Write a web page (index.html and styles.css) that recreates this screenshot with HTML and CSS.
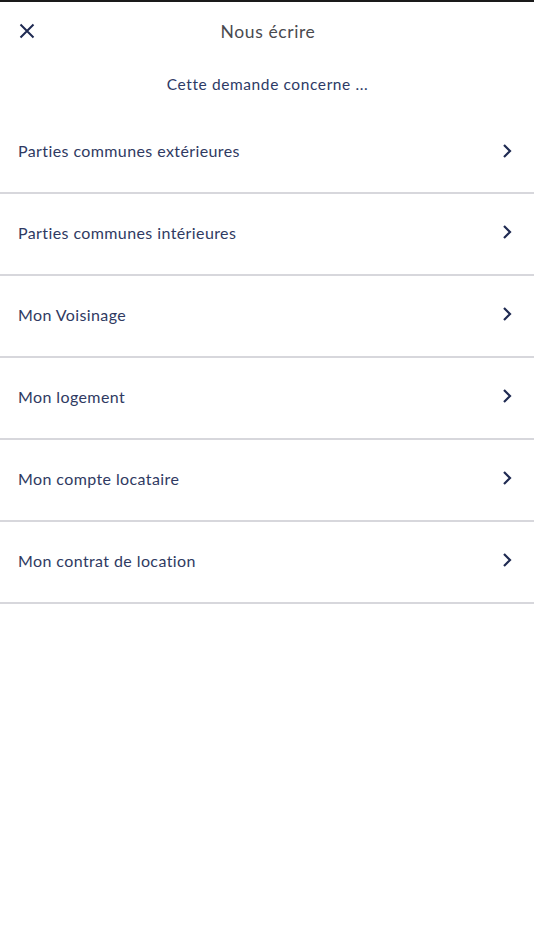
FILE: index.html
```html
<!DOCTYPE html>
<html lang="fr">
<head>
<meta charset="utf-8">
<link rel="stylesheet" href="styles.css">
</head>
<body>
<div class="topline"></div>
<header class="header">
  <button class="close" aria-label="Fermer">
    <svg width="16" height="16" viewBox="0 0 16 16"><path d="M1.5 1.5 L14.5 14.5 M14.5 1.5 L1.5 14.5" stroke="#1f2a52" stroke-width="2" fill="none"/></svg>
  </button>
  <h1 class="title">Nous écrire</h1>
</header>
<p class="subtitle">Cette demande concerne ...</p>
<ul class="list">
  <li class="item"><span>Parties communes extérieures</span><svg class="chev" width="10" height="16" viewBox="0 0 10 16"><path d="M2 2 L8 8 L2 14" stroke="#1f2a52" stroke-width="2.2" fill="none"/></svg></li>
  <li class="item"><span>Parties communes intérieures</span><svg class="chev" width="10" height="16" viewBox="0 0 10 16"><path d="M2 2 L8 8 L2 14" stroke="#1f2a52" stroke-width="2.2" fill="none"/></svg></li>
  <li class="item"><span>Mon Voisinage</span><svg class="chev" width="10" height="16" viewBox="0 0 10 16"><path d="M2 2 L8 8 L2 14" stroke="#1f2a52" stroke-width="2.2" fill="none"/></svg></li>
  <li class="item"><span>Mon logement</span><svg class="chev" width="10" height="16" viewBox="0 0 10 16"><path d="M2 2 L8 8 L2 14" stroke="#1f2a52" stroke-width="2.2" fill="none"/></svg></li>
  <li class="item"><span>Mon compte locataire</span><svg class="chev" width="10" height="16" viewBox="0 0 10 16"><path d="M2 2 L8 8 L2 14" stroke="#1f2a52" stroke-width="2.2" fill="none"/></svg></li>
  <li class="item"><span>Mon contrat de location</span><svg class="chev" width="10" height="16" viewBox="0 0 10 16"><path d="M2 2 L8 8 L2 14" stroke="#1f2a52" stroke-width="2.2" fill="none"/></svg></li>
</ul>
</body>
</html>
```
FILE: styles.css
```css
* { box-sizing: border-box; }
html, body { margin: 0; padding: 0; background: #fff; }
body { font-family: Lato, "Open Sans", sans-serif; width: 534px; height: 950px; }
.topline { height: 2px; background: #1a1a1a; }
.header { position: relative; height: 58px; display: flex; align-items: center; justify-content: center; }
.close { position: absolute; left: 19px; top: 21px; width: 16px; height: 16px; padding: 0; border: 0; background: none; display: flex; }
.title { margin: 0; font-size: 17.5px; font-weight: 400; color: #4a4a4f; letter-spacing: 0.6px; padding-left: 2px; }
.subtitle { margin: 0; height: 53px; padding-top: 15px; text-align: center; font-size: 15.5px; color: #2d3a66; letter-spacing: 0.6px; padding-left: 1px; }
.list { list-style: none; margin: 0; padding: 0; }
.item { height: 82px; display: flex; align-items: center; justify-content: space-between; padding: 0 22px 4px 18px; border-bottom: 2px solid #d7d7dc; font-size: 16px; color: #2f3a62; letter-spacing: 0.4px; }
.item:first-child { height: 81px; }
.chev { display: block; }
```
